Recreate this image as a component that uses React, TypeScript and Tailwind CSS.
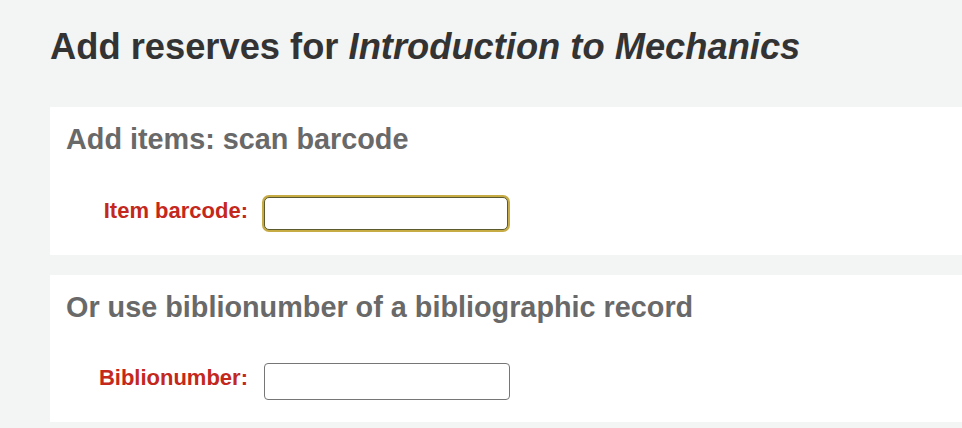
// Course reserves: add items page
export default function App() {
  return (
    <div
      className="min-h-[428px] bg-[#f3f4f4] pl-[50px] pt-[26px] pb-[7px] overflow-hidden"
      style={{ fontFamily: '"Liberation Sans", Arial, sans-serif' }}
    >
      <h1 className="text-[36.3px] leading-[42px] font-bold text-[#333333] whitespace-nowrap">
        Add reserves for <i>Introduction to Mechanics</i>
      </h1>

      <div className="mt-[39px] flex flex-col gap-[20px]">
        {/* Barcode panel */}
        <div className="bg-white pl-[16px] pt-[16px] pb-[25px]">
          <h2 className="text-[28.8px] leading-[32px] font-bold text-[#696969] whitespace-nowrap">
            Add items: scan barcode
          </h2>
          <div className="mt-[42px] flex items-start -ml-[16px] gap-[16px]">
            <label className="w-[198px] text-right text-[22px] leading-[25px] font-bold text-[#c4281c] pt-[1px]">
              Item barcode:
            </label>
            <input
              type="text"
              className="w-[244px] h-[33px] rounded-[5px] border border-[#5b5a2e] bg-white outline-none ring-2 ring-[#c7ab45]"
            />
          </div>
        </div>

        {/* Biblionumber panel */}
        <div className="bg-white pl-[16px] pt-[16px] pb-[22px]">
          <h2 className="text-[28.8px] leading-[32px] font-bold text-[#696969] whitespace-nowrap">
            Or use biblionumber of a bibliographic record
          </h2>
          <div className="mt-[40px] flex items-start -ml-[16px] gap-[16px]">
            <label className="w-[198px] text-right text-[22px] leading-[25px] font-bold text-[#c4281c] pt-[2px]">
              Biblionumber:
            </label>
            <input
              type="text"
              className="w-[246px] h-[37px] rounded-[4px] border border-[#767676] bg-white outline-none"
            />
          </div>
        </div>
      </div>
    </div>
  );
}
